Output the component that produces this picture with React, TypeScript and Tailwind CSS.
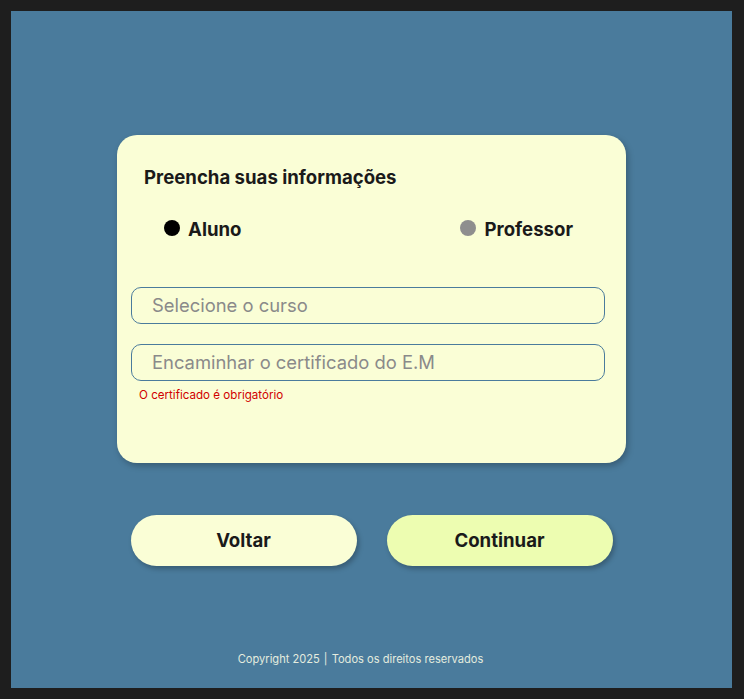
export default function App() {
  return (
    <div className="h-[699px] w-[744px] bg-[#1e1e1e] p-[11px] font-['Inter',sans-serif]">
      <div className="flex h-[677px] w-[721px] flex-col items-center bg-[#4a7b9c]">
        {/* card */}
        <div className="mt-[124px] h-[328px] w-[509px] rounded-[20px] bg-[#fafed6] pl-[14px] pr-[21px] pt-[28px] shadow-[2px_3px_6px_rgba(0,0,0,0.25)]">
          <h1 className="pl-[13px] text-[18.6px] font-bold leading-7 text-[#1a1a1a]">Preencha suas informações</h1>
          <div className="mt-[25px] flex items-center justify-between pl-[33px] pr-[32px]">
            <label className="flex items-center gap-[8px]">
              <span className="mt-[-4px] h-4 w-4 rounded-full bg-black" />
              <span className="text-[18.6px] font-bold text-[#1a1a1a]">Aluno</span>
            </label>
            <label className="flex items-center gap-[9px]">
              <span className="mt-[-4px] h-4 w-4 rounded-full bg-[#8e8e8e]" />
              <span className="text-[18.6px] font-bold text-[#1a1a1a]">Professor</span>
            </label>
          </div>
          <div className="mt-[43px] flex flex-col gap-[20px]">
            <div className="flex h-[37px] items-center rounded-[10px] border border-[#4a7b9c] px-[20px] text-[18.4px] text-[#8a8a8a]">
              Selecione o curso
            </div>
            <div>
              <div className="flex h-[37px] items-center rounded-[10px] border border-[#4a7b9c] px-[20px] text-[18.4px] text-[#8a8a8a]">
                Encaminhar o certificado do E.M
              </div>
              <p className="mt-[6px] pl-[8px] text-[11.6px] text-[#d10000]">O certificado é obrigatório</p>
            </div>
          </div>
        </div>
        {/* buttons */}
        <div className="mt-[52px] flex gap-[30px]">
          <button className="h-[51px] w-[226px] rounded-full bg-[#fafed6] text-[18.6px] font-bold text-[#1a1a1a] shadow-[2px_3px_5px_rgba(0,0,0,0.25)]">Voltar</button>
          <button className="h-[51px] w-[226px] rounded-full bg-[#edfdb1] text-[18.6px] font-bold text-[#1a1a1a] shadow-[2px_3px_5px_rgba(0,0,0,0.25)]">Continuar</button>
        </div>
        <footer className="mt-auto mb-[20px] pr-[22px] text-[11.1px] text-[#e4ecdf]">
          Copyright 2025 <span className="mx-[1px]">|</span> Todos os direitos reservados
        </footer>
      </div>
    </div>
  );
}
